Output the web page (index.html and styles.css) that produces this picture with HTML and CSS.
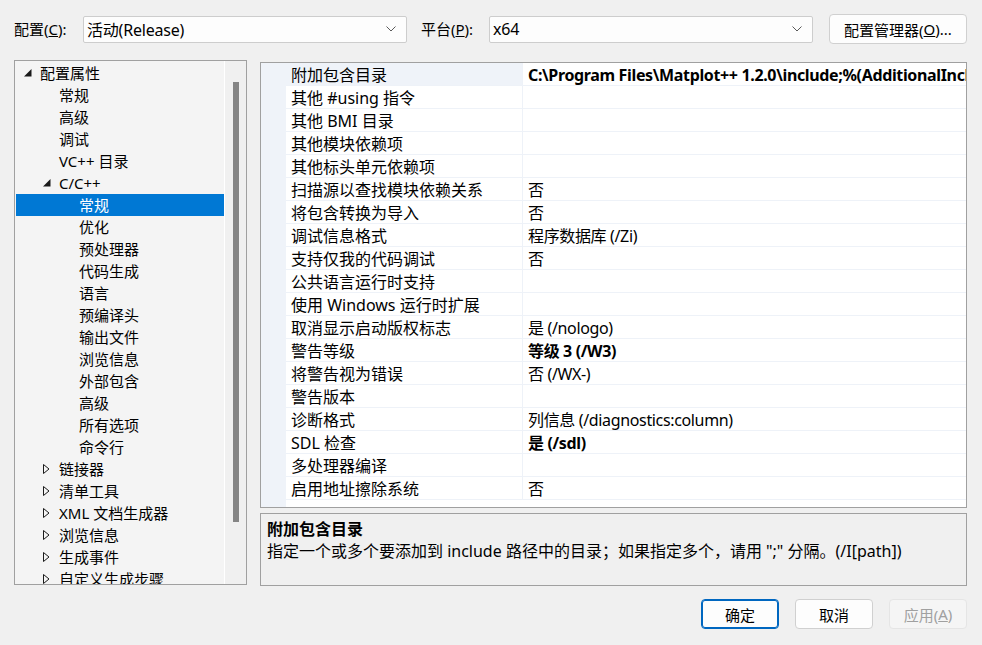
FILE: index.html
```html
<!DOCTYPE html>
<html>
<head>
    <meta charset="UTF-8">
    <link rel="stylesheet" href="styles.css">
</head>
<body>
<div class="dialog">
    <div class="toolbar">
        <div class="lbl">配置(<u>C</u>):</div>
        <div class="combo">
            <span>活动(Release)</span>
            <svg class="chev" width="10" height="6" viewBox="0 0 10 6"><polyline points="0.5,0.5 5,5 9.5,0.5" fill="none" stroke="#5a5a5a" stroke-width="1"/></svg>
        </div>
        <div class="lbl lbl2">平台(<u>P</u>):</div>
        <div class="combo">
            <span>x64</span>
            <svg class="chev" width="10" height="6" viewBox="0 0 10 6"><polyline points="0.5,0.5 5,5 9.5,0.5" fill="none" stroke="#5a5a5a" stroke-width="1"/></svg>
        </div>
        <div class="btn mgr">配置管理器(<u>O</u>)...</div>
    </div>

    <div class="main">
        <div class="tree">
            <div class="tree-items">
                <div class="node l0"><span class="tw"><svg width="8" height="8" viewBox="0 0 8 8"><polygon points="7.5,0 7.5,7.5 0,7.5" fill="#1a1a1a"/></svg></span>配置属性</div>
                <div class="node l1"><span class="tw"></span>常规</div>
                <div class="node l1"><span class="tw"></span>高级</div>
                <div class="node l1"><span class="tw"></span>调试</div>
                <div class="node l1"><span class="tw"></span>VC++ 目录</div>
                <div class="node l1"><span class="tw"><svg width="8" height="8" viewBox="0 0 8 8"><polygon points="7.5,0 7.5,7.5 0,7.5" fill="#1a1a1a"/></svg></span>C/C++</div>
                <div class="node l2 sel"><span class="tw"></span>常规</div>
                <div class="node l2"><span class="tw"></span>优化</div>
                <div class="node l2"><span class="tw"></span>预处理器</div>
                <div class="node l2"><span class="tw"></span>代码生成</div>
                <div class="node l2"><span class="tw"></span>语言</div>
                <div class="node l2"><span class="tw"></span>预编译头</div>
                <div class="node l2"><span class="tw"></span>输出文件</div>
                <div class="node l2"><span class="tw"></span>浏览信息</div>
                <div class="node l2"><span class="tw"></span>外部包含</div>
                <div class="node l2"><span class="tw"></span>高级</div>
                <div class="node l2"><span class="tw"></span>所有选项</div>
                <div class="node l2"><span class="tw"></span>命令行</div>
                <div class="node l1"><span class="tw"><svg width="7" height="10" viewBox="0 0 7 10"><polygon points="0.5,0.5 6,5 0.5,9.5" fill="none" stroke="#1a1a1a" stroke-width="1"/></svg></span>链接器</div>
                <div class="node l1"><span class="tw"><svg width="7" height="10" viewBox="0 0 7 10"><polygon points="0.5,0.5 6,5 0.5,9.5" fill="none" stroke="#1a1a1a" stroke-width="1"/></svg></span>清单工具</div>
                <div class="node l1"><span class="tw"><svg width="7" height="10" viewBox="0 0 7 10"><polygon points="0.5,0.5 6,5 0.5,9.5" fill="none" stroke="#1a1a1a" stroke-width="1"/></svg></span>XML 文档生成器</div>
                <div class="node l1"><span class="tw"><svg width="7" height="10" viewBox="0 0 7 10"><polygon points="0.5,0.5 6,5 0.5,9.5" fill="none" stroke="#1a1a1a" stroke-width="1"/></svg></span>浏览信息</div>
                <div class="node l1"><span class="tw"><svg width="7" height="10" viewBox="0 0 7 10"><polygon points="0.5,0.5 6,5 0.5,9.5" fill="none" stroke="#1a1a1a" stroke-width="1"/></svg></span>生成事件</div>
                <div class="node l1"><span class="tw"><svg width="7" height="10" viewBox="0 0 7 10"><polygon points="0.5,0.5 6,5 0.5,9.5" fill="none" stroke="#1a1a1a" stroke-width="1"/></svg></span>自定义生成步骤</div>
            </div>
            <div class="vscroll"><div class="thumb"></div></div>
        </div>

        <div class="right">
            <div class="grid">
                <div class="gutter"></div>
                <div class="rows">
                    <div class="row sel"><div class="name">附加包含目录</div><div class="val b">C:\Program Files\Matplot++ 1.2.0\include;%(AdditionalIncludeDirectories)</div></div>
                    <div class="row"><div class="name">其他 #using 指令</div><div class="val"></div></div>
                    <div class="row"><div class="name">其他 BMI 目录</div><div class="val"></div></div>
                    <div class="row"><div class="name">其他模块依赖项</div><div class="val"></div></div>
                    <div class="row"><div class="name">其他标头单元依赖项</div><div class="val"></div></div>
                    <div class="row"><div class="name">扫描源以查找模块依赖关系</div><div class="val">否</div></div>
                    <div class="row"><div class="name">将包含转换为导入</div><div class="val">否</div></div>
                    <div class="row"><div class="name">调试信息格式</div><div class="val">程序数据库 (/Zi)</div></div>
                    <div class="row"><div class="name">支持仅我的代码调试</div><div class="val">否</div></div>
                    <div class="row"><div class="name">公共语言运行时支持</div><div class="val"></div></div>
                    <div class="row"><div class="name">使用 Windows 运行时扩展</div><div class="val"></div></div>
                    <div class="row"><div class="name">取消显示启动版权标志</div><div class="val">是 (/nologo)</div></div>
                    <div class="row"><div class="name">警告等级</div><div class="val b">等级 3 (/W3)</div></div>
                    <div class="row"><div class="name">将警告视为错误</div><div class="val">否 (/WX-)</div></div>
                    <div class="row"><div class="name">警告版本</div><div class="val"></div></div>
                    <div class="row"><div class="name">诊断格式</div><div class="val">列信息 (/diagnostics:column)</div></div>
                    <div class="row"><div class="name">SDL 检查</div><div class="val b">是 (/sdl)</div></div>
                    <div class="row"><div class="name">多处理器编译</div><div class="val"></div></div>
                    <div class="row"><div class="name">启用地址擦除系统</div><div class="val">否</div></div>
                </div>
            </div>
            <div class="desc">
                <div class="desc-title">附加包含目录</div>
                <div class="desc-text">指定一个或多个要添加到 include 路径中的目录；如果指定多个，请用 ";" 分隔。(/I[path])</div>
            </div>
        </div>
    </div>

    <div class="footer">
        <div class="btn ok">确定</div>
        <div class="btn">取消</div>
        <div class="btn disabled">应用(<u>A</u>)</div>
    </div>
</div>
</body>
</html>
```

FILE: styles.css
```css
* {
    box-sizing: border-box;
}

body {
    margin: 0;
    width: 982px;
    height: 645px;
    overflow: hidden;
    background: #f0f0f0;
    color: #000;
    font-family: "Noto Sans", "Noto Sans CJK SC", sans-serif;
    font-size: 15px;
}

.dialog {
    padding: 14px 15px 0 14px;
}

/* top row */
.toolbar {
    display: flex;
    align-items: center;
    height: 30px;
}

.lbl {
    width: 69px;
    line-height: 20px;
}

.lbl2 {
    width: 68px;
    margin-left: 14px;
}

.combo {
    width: 324px;
    height: 27px;
    border: 1px solid #cdcdcd;
    border-radius: 2px;
    background: #fdfdfd;
    display: flex;
    align-items: center;
    justify-content: space-between;
    padding: 0 10px 0 3px;
    font-size: 16px;
    letter-spacing: -0.2px;
}

.btn {
    height: 30px;
    border: 1px solid #d0d0d0;
    border-radius: 4px;
    background: #fdfdfd;
    display: flex;
    align-items: center;
    justify-content: center;
}

.mgr {
    width: 138px;
    margin-left: 16px;
}

/* main area */
.main {
    display: flex;
    gap: 13px;
    margin-top: 16px;
}

.tree {
    width: 233px;
    height: 525px;
    border: 1px solid #a0a0a0;
    background: #f4f4f4;
    display: flex;
    overflow: hidden;
}

.tree-items {
    width: 210px;
    padding: 1px 0 0 1px;
    border-right: 1px solid #ffffff;
}

.node {
    height: 22px;
    display: flex;
    align-items: center;
    white-space: nowrap;
    line-height: 22px;
}

.node.l0 { padding-left: 8px; }
.node.l1 { padding-left: 27px; }
.node.l2 { padding-left: 47px; }

.tw {
    width: 16px;
    flex: none;
    display: flex;
    align-items: center;
}

.node.sel {
    background: #0078d4;
    color: #fff;
}

.vscroll {
    flex: 1;
    background: #f0f0f0;
    padding-top: 21px;
    display: flex;
    justify-content: center;
}

.thumb {
    width: 6px;
    height: 440px;
    background: #858585;
}

.right {
    width: 707px;
    margin-top: 2px;
}

.grid {
    height: 446px;
    border: 1px solid #a0a0a0;
    background: #ffffff;
    display: flex;
    overflow: hidden;
}

.gutter {
    width: 25px;
    flex: none;
    background: #eff3f9;
}

.rows {
    flex: 1;
    min-width: 0;
}

.row {
    display: flex;
    height: 23px;
    border-bottom: 1px solid #eef2f8;
    font-size: 16px;
    line-height: 20px;
}

.name {
    width: 237px;
    flex: none;
    padding: 2px 0 0 5px;
    border-right: 1px solid #eef2f8;
    white-space: nowrap;
}

.row.sel .name {
    background: #eff3f9;
}

.val {
    flex: 1;
    padding: 2px 0 0 5px;
    white-space: nowrap;
    overflow: hidden;
    letter-spacing: -0.35px;
}

.b {
    font-weight: bold;
}

.desc {
    margin-top: 5px;
    height: 73px;
    border: 1px solid #a0a0a0;
    background: #f0f0f0;
    padding: 4px 6px;
    font-size: 16px;
    line-height: 22px;
}

.desc-title {
    font-weight: bold;
}

/* bottom buttons */
.footer {
    display: flex;
    justify-content: flex-end;
    gap: 16px;
    margin-top: 13px;
}

.footer .btn {
    width: 78px;
}

.btn.ok {
    border: 1px solid #0067c0;
    box-shadow: inset 0 0 0 1px #0067c0;
}

.btn.disabled {
    background: #f5f5f5;
    border-color: #e5e5e5;
    color: #a0a0a0;
}
```
